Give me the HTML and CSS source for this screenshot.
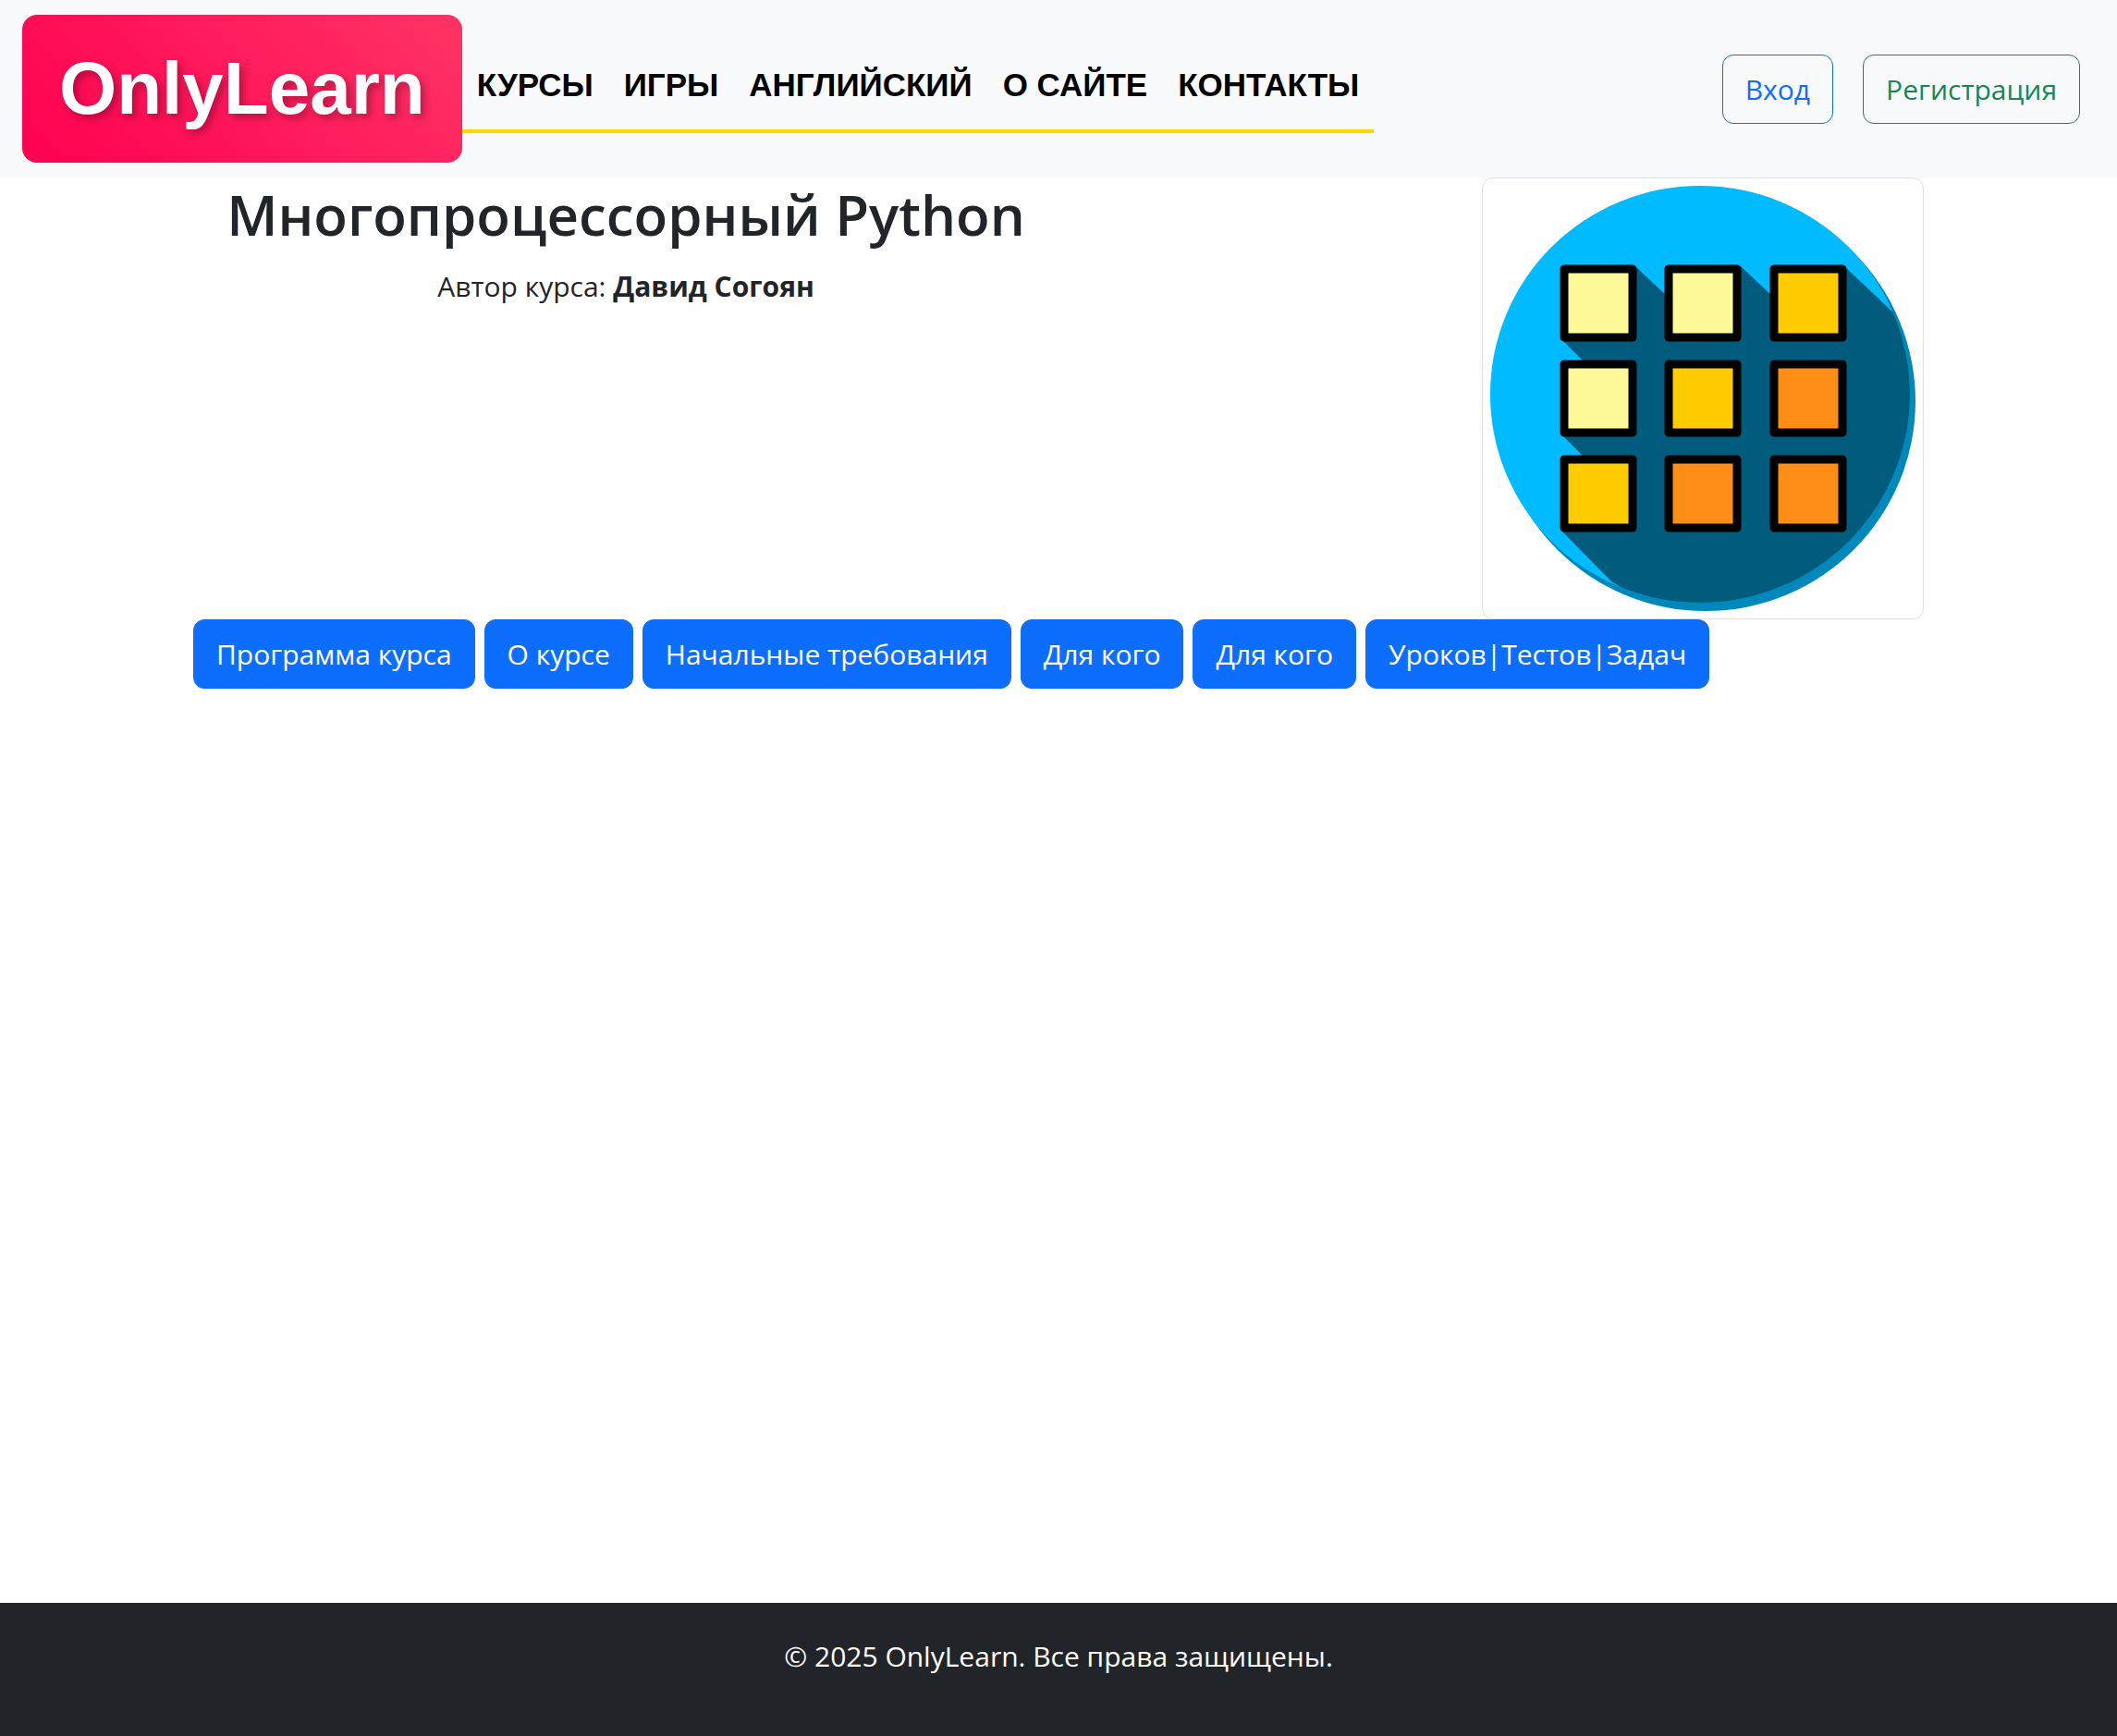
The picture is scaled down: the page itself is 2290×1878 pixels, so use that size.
FILE: index.html
```html
<!DOCTYPE html>
<html lang="ru">
<head>
<meta charset="utf-8">
<meta name="viewport" content="width=device-width, initial-scale=1">
<title>OnlyLearn</title>
<link rel="stylesheet" href="styles.css">
</head>
<body>
<header class="navbar">
  <a class="brand" href="#">OnlyLearn</a>
  <nav class="menu">
    <a class="menu-link" href="#">КУРСЫ</a>
    <a class="menu-link" href="#">ИГРЫ</a>
    <a class="menu-link" href="#">АНГЛИЙСКИЙ</a>
    <a class="menu-link" href="#">О САЙТЕ</a>
    <a class="menu-link" href="#">КОНТАКТЫ</a>
  </nav>
  <div class="account">
    <button class="btn btn-login" type="button">Вход</button>
    <button class="btn btn-register" type="button">Регистрация</button>
  </div>
</header>
<main class="container">
  <section class="course">
    <div class="course-info">
      <h1 class="course-title">Многопроцессорный Python</h1>
      <p class="course-author">Автор курса: <strong>Давид Согоян</strong></p>
    </div>
    <div class="course-cover">
      <svg class="cover-image" viewBox="0 0 460 460" role="img" aria-label="Многопроцессорный Python">
        <defs>
          <clipPath id="disc"><ellipse cx="227" cy="225.5" rx="227" ry="225.5"/></clipPath>
        </defs>
        <circle cx="233" cy="233" r="227" fill="#0088bb"/>
        <g clip-path="url(#disc)">
          <rect width="460" height="460" fill="#00bbff"/>
          <path fill="#005b7c" d="M157 87 193 121V166H77L104 193V269H77L104 296V373H77L131 428 200 470H470V180L438 139 383 87V166H307V121L271 87V166H157Z"/>
        </g>
        <g stroke="#000" stroke-width="9" stroke-linejoin="round">
          <g fill="#fffa99">
            <rect x="80" y="90" width="74" height="74"/>
            <rect x="193" y="90" width="74" height="74"/>
            <rect x="80" y="193" width="74" height="74"/>
          </g>
          <g fill="#ffcc00">
            <rect x="307" y="90" width="74" height="74"/>
            <rect x="193" y="193" width="74" height="74"/>
            <rect x="80" y="296" width="74" height="74"/>
          </g>
          <g fill="#ff8e17">
            <rect x="307" y="193" width="74" height="74"/>
            <rect x="193" y="296" width="74" height="74"/>
            <rect x="307" y="296" width="74" height="74"/>
          </g>
        </g>
      </svg>
    </div>
  </section>
  <div class="tabs">
    <button class="btn btn-primary" type="button">Программа курса</button>
    <button class="btn btn-primary" type="button">О курсе</button>
    <button class="btn btn-primary" type="button">Начальные требования</button>
    <button class="btn btn-primary" type="button">Для кого</button>
    <button class="btn btn-primary" type="button">Для кого</button>
    <button class="btn btn-primary" type="button">Уроков|Тестов|Задач</button>
  </div>
</main>
<footer class="footer">
  <p class="copyright">© 2025 OnlyLearn. Все права защищены.</p>
</footer>
</body>
</html>
```
FILE: styles.css
```css
* { box-sizing: border-box; }

body {
  margin: 0;
  min-height: 100vh;
  display: flex;
  flex-direction: column;
  background: #fff;
  color: #212529;
  font-family: "Open Sans", "Noto Sans", sans-serif;
  font-size: 30px;
  line-height: 48px;
}

.navbar {
  display: flex;
  align-items: center;
  padding: 16px 40px 16px 24px;
  background: #f8f9fa;
}

.brand {
  padding: 32px 40px;
  border-radius: 16px;
  background: linear-gradient(45deg, #ff0050, #ff3366);
  color: #fff;
  font: bold 80px/96px "Liberation Sans", Arial, sans-serif;
  text-decoration: none;
  text-shadow: 4px 4px 8px rgba(0, 0, 0, 0.3);
}

.menu {
  display: flex;
  gap: 1px;
  border-bottom: 4px solid #ffd700;
}

.menu-link {
  padding: 20px 16px 24px;
  color: #000;
  font: bold 35px/48px "Liberation Sans", Arial, sans-serif;
  text-decoration: none;
}

.account {
  display: flex;
  gap: 32px;
  margin-left: auto;
}

.btn {
  padding: 13px 24px 12px;
  border: 1px solid transparent;
  border-radius: 12px;
  background: transparent;
  font: inherit;
  white-space: nowrap;
  cursor: pointer;
}

.btn-login { border-color: #0d6efd; color: #0d6efd; }
.btn-register { border-color: #198754; color: #198754; }
.btn-primary { border-color: #0d6efd; background: #0d6efd; color: #fff; }

.container {
  width: 100%;
  max-width: 1920px;
  margin: 0 auto;
  padding: 0 24px;
}

.course {
  display: flex;
  justify-content: space-between;
  align-items: flex-start;
}

.course-info { width: 50%; text-align: center; }

.course-title {
  margin: 0 0 14px;
  font-size: 60px;
  font-weight: 600;
  line-height: 80px;
}

.course-author { margin: 0; }

.course-cover {
  display: flex;
  padding: 8px;
  border: 1px solid #dee2e6;
  border-radius: 12px;
}

.cover-image { width: 460px; height: 460px; }

.tabs {
  display: flex;
  flex-wrap: wrap;
  gap: 10px;
}

.footer {
  margin-top: auto;
  padding: 34px 32px 30px;
  background: #212529;
  color: #fff;
  text-align: center;
}

.copyright { margin: 0 0 32px; }
```
